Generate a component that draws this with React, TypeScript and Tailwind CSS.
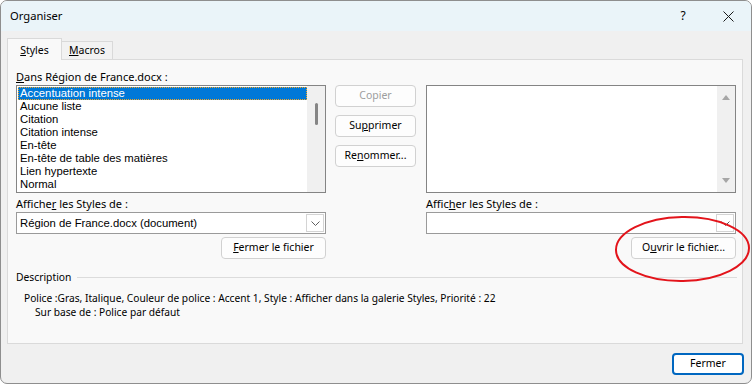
import React from "react";

const styleNames = [
  "Accentuation intense",
  "Aucune liste",
  "Citation",
  "Citation intense",
  "En-tête",
  "En-tête de table des matières",
  "Lien hypertexte",
  "Normal",
];

const Chevron = () => (
  <svg width="9" height="5" viewBox="0 0 9 5" fill="none">
    <path d="M0.5 0.5 L4.5 4.5 L8.5 0.5" stroke="#5f5f5f" strokeWidth="1" />
  </svg>
);

const Btn = ({ children, disabled, className = "" }: { children: React.ReactNode; disabled?: boolean; className?: string }) => (
  <div
    className={`h-[22px] flex items-center justify-center rounded-[4px] border border-[#d1d1d1] bg-[#fdfdfd] text-[10.5px] ${
      disabled ? "text-[#9d9d9d]" : "text-black"
    } ${className}`}
  >
    {children}
  </div>
);

const Combo = ({ value }: { value?: string }) => (
  <div className="h-[22px] flex border border-[#9a9a9a] bg-white">
    <div className="flex-1 pl-[3px] leading-[20px] text-[11.3px] font-['Liberation_Sans',sans-serif]">{value}</div>
    <div className="w-[18px] m-[1px] ml-0 border border-[#d4d4d4] flex items-center justify-center bg-white">
      <Chevron />
    </div>
  </div>
);

export default function App() {
  return (
    <div className="w-[752px] h-[384px] bg-white">
      <div className="relative flex flex-col w-full h-full rounded-[7px] border border-[#8e8e8e] bg-[#f0f0f0] overflow-hidden font-['Noto_Sans',sans-serif] text-[11px] text-black">
        {/* title bar */}
        <div className="h-[30px] shrink-0 flex items-center bg-[#eaf4f9]">
          <div className="pl-[9px] text-[11.2px]">Organiser</div>
          <div className="ml-auto flex h-full">
            <div className="w-[46px] flex items-center justify-center text-[12px] pl-[2px]">?</div>
            <div className="w-[46px] flex items-center justify-center">
              <svg width="11" height="11" viewBox="0 0 11 11">
                <path d="M0.5 0.5 L10.5 10.5 M10.5 0.5 L0.5 10.5" stroke="#1a1a1a" strokeWidth="1" />
              </svg>
            </div>
          </div>
        </div>

        <div className="flex-1 flex flex-col px-[6px] pt-[7px]">
          {/* tabs */}
          <div className="flex items-start h-[22px] -mb-px relative z-10 text-[10.5px]">
            <div className="w-[55px] h-[22px] border border-b-0 border-[#d9d9d9] bg-[#f9f9f9] flex justify-center pt-[4px] leading-[14px]">
              <span><u>S</u>tyles</span>
            </div>
            <div className="mt-[3px] w-[51px] h-[18px] border border-l-0 border-b-0 border-[#d9d9d9] bg-[#f2f2f2] flex justify-center pt-[1px] leading-[14px]">
              <span><u>M</u>acros</span>
            </div>
          </div>

          {/* panel */}
          <div className="w-[736px] h-[285px] border border-[#dadada] bg-[#f9f9f9] pt-[9px] pl-[8px] pr-[5px]">
            <div className="flex">
              {/* left column */}
              <div className="w-[310px]">
                <div className="h-[16px] leading-[16px]"><u>D</u>ans Région de France.docx :</div>
                <div className="h-[108px] flex border border-[#848484] bg-white">
                  <div className="flex-1 pt-[1px] pl-[1px] font-['Liberation_Sans',sans-serif] text-[11.3px]">
                    {styleNames.map((name, i) => (
                      <div
                        key={name}
                        className={`h-[13px] leading-[13px] pl-[2px] ${
                          i === 0 ? "bg-[#0078d7] text-white outline outline-1 outline-dotted outline-[#f5a623] -outline-offset-1" : ""
                        }`}
                      >
                        {name}
                      </div>
                    ))}
                  </div>
                  <div className="w-[18px] bg-[#f0f0f0] flex justify-center pt-[17px]">
                    <div className="w-[3px] h-[22px] rounded-full bg-[#858585]" />
                  </div>
                </div>
                <div className="mt-[3px] h-[16px] leading-[16px]">Affiche<u>r</u> les Styles de :</div>
                <Combo value="Région de France.docx (document)" />
                <div className="flex justify-end mt-[3px]">
                  <Btn className="w-[105px]"><span><u>F</u>ermer le fichier</span></Btn>
                </div>
              </div>

              {/* middle buttons */}
              <div className="ml-[9px] w-[81px] pt-[16px] flex flex-col gap-[8px]">
                <Btn disabled>Copier</Btn>
                <Btn><span>Su<u>p</u>primer</span></Btn>
                <Btn><span>Re<u>n</u>ommer...</span></Btn>
              </div>

              {/* right column */}
              <div className="ml-[10px] w-[310px]">
                <div className="h-[16px]" />
                <div className="h-[108px] flex border border-[#848484] bg-white">
                  <div className="flex-1" />
                  <div className="w-[18px] bg-[#f0f0f0] flex flex-col items-center justify-between py-[9px]">
                    <svg width="8" height="5" viewBox="0 0 8 5"><path d="M4 0 L8 5 L0 5 Z" fill="#a6a6a6" /></svg>
                    <svg width="8" height="5" viewBox="0 0 8 5"><path d="M0 0 L8 0 L4 5 Z" fill="#a6a6a6" /></svg>
                  </div>
                </div>
                <div className="mt-[3px] h-[16px] leading-[16px]">Affic<u>h</u>er les Styles de :</div>
                <Combo />
                <div className="flex justify-end mt-[3px]">
                  <Btn className="w-[105px]"><span>O<u>u</u>vrir le fichier...</span></Btn>
                </div>
              </div>
            </div>

            {/* description */}
            <div className="mt-[10px] h-[16px] flex items-center text-[10.3px]">
              <span className="leading-[16px]">Description</span>
              <div className="flex-1 h-px bg-[#dcdcdc] ml-[6px]" />
            </div>
            <div className="text-[10.2px] leading-[14px]">
              <div className="mt-[6px] pl-[8px]">
                Police :Gras, Italique, Couleur de police : Accent 1, Style : Afficher dans la galerie Styles, Priorité : 22
              </div>
              <div className="pl-[19px]">Sur base de : Police par défaut</div>
            </div>
          </div>

          {/* footer */}
          <div className="flex justify-end mt-[9px] mr-[1px]">
            <div className="w-[72px] h-[22px] rounded-[4px] border-2 border-[#0067c0] bg-white flex items-center justify-center text-[10.5px]">
              Fermer
            </div>
          </div>
        </div>

        {/* red hand-drawn ellipse annotation */}
        <svg className="absolute left-[613px] top-[214px]" width="138" height="69" viewBox="0 0 138 69" fill="none">
          <ellipse cx="68.5" cy="34" rx="66.5" ry="32" stroke="#e3141b" strokeWidth="2" transform="rotate(-1 68.5 34)" />
        </svg>
      </div>
    </div>
  );
}
